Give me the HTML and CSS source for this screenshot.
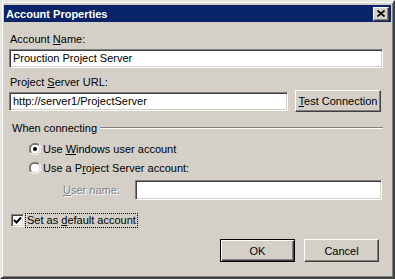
FILE: index.html
```html
<!DOCTYPE html>
<html lang="en">
<head>
    <meta charset="UTF-8">
    <title>Account Properties</title>
    <link rel="stylesheet" href="styles.css">
</head>
<body>
    <div class="window">
        <div class="titlebar">
            <span class="title">Account Properties</span>
            <span class="close-btn">
                <svg width="8" height="7" viewBox="0 0 8 7"><path d="M0.5 0.5 L7.5 6.5 M7.5 0.5 L0.5 6.5" stroke="#000" stroke-width="1.6" fill="none"/></svg>
            </span>
        </div>
        <div class="content">
            <label class="label first">Account <u>N</u>ame:</label>
            <div class="field wide">Prouction Project Server</div>

            <label class="label second">Project <u>S</u>erver URL:</label>
            <div class="url-row">
                <div class="field url">http://server1/ProjectServer</div>
                <button class="btn test-btn"><u>T</u>est Connection</button>
            </div>

            <div class="group-head">
                <span>When connecting</span>
                <span class="etched"></span>
            </div>

            <div class="radio-row first-radio">
                <svg class="radio" width="12" height="12" viewBox="0 0 12 12">
                    <circle cx="6" cy="6" r="5" fill="#fff"/>
                    <path d="M10.2 1.8 A5.9 5.9 0 0 0 1.8 10.2" stroke="#808080" fill="none"/>
                    <path d="M9.5 2.5 A4.9 4.9 0 0 0 2.5 9.5" stroke="#404040" fill="none"/>
                    <path d="M1.8 10.2 A5.9 5.9 0 0 0 10.2 1.8" stroke="#fff" fill="none"/>
                    <path d="M2.5 9.5 A4.9 4.9 0 0 0 9.5 2.5" stroke="#d4d0c8" fill="none"/>
                    <circle cx="6" cy="6" r="2" fill="#000"/>
                </svg>
                <span>Use <u>W</u>indows user account</span>
            </div>
            <div class="radio-row">
                <svg class="radio" width="12" height="12" viewBox="0 0 12 12">
                    <circle cx="6" cy="6" r="5" fill="#fff"/>
                    <path d="M10.2 1.8 A5.9 5.9 0 0 0 1.8 10.2" stroke="#808080" fill="none"/>
                    <path d="M9.5 2.5 A4.9 4.9 0 0 0 2.5 9.5" stroke="#404040" fill="none"/>
                    <path d="M1.8 10.2 A5.9 5.9 0 0 0 10.2 1.8" stroke="#fff" fill="none"/>
                    <path d="M2.5 9.5 A4.9 4.9 0 0 0 9.5 2.5" stroke="#d4d0c8" fill="none"/>
                </svg>
                <span>Use a P<u>r</u>oject Server account:</span>
            </div>

            <div class="user-row">
                <span class="disabled"><u>U</u>ser name:</span>
                <div class="field user"></div>
            </div>

            <div class="check-row">
                <span class="checkbox">
                    <svg width="9" height="9" viewBox="0 0 9 9"><path d="M1 4 L3.5 6.5 L8 1.5" stroke="#000" stroke-width="2" fill="none"/></svg>
                </span>
                <span class="focus">Set as <u>d</u>efault account</span>
            </div>

            <div class="button-row">
                <button class="btn default">OK</button>
                <button class="btn">Cancel</button>
            </div>
        </div>
    </div>
</body>
</html>
```

FILE: styles.css
```css
* {
    margin: 0;
    padding: 0;
    box-sizing: border-box;
}
body {
    font-family: 'Liberation Sans', Arial, sans-serif;
    font-size: 11px;
    color: #000;
    background: #d4d0c8;
}
u {
    text-decoration: underline;
    text-underline-offset: 1px;
}
.window {
    width: 395px;
    height: 279px;
    background: #d4d0c8;
    border: 2px solid;
    border-color: #e8e6e0 #404040 #404040 #e8e6e0;
    box-shadow: inset 1px 1px #fff, inset -1px -1px #808080;
    padding: 2px;
    display: flex;
    flex-direction: column;
}
.titlebar {
    height: 17px;
    margin-top: 1px;
    background: #0a246a;
    display: flex;
    justify-content: space-between;
    align-items: center;
    padding: 0 2px 0 2px;
}
.title {
    color: #fff;
    font-weight: bold;
    font-size: 11px;
}
.close-btn {
    width: 16px;
    height: 14px;
    background: #d4d0c8;
    border: 1px solid;
    border-color: #fff #404040 #404040 #fff;
    box-shadow: inset -1px -1px #808080;
    display: flex;
    justify-content: center;
    align-items: center;
}
.content {
    padding: 0 8px 0 5px;
    display: flex;
    flex-direction: column;
}
.label {
    line-height: 13px;
    padding-left: 1px;
}
.label.first {
    margin-top: 11px;
}
.label.second {
    margin-top: 8px;
}
.field {
    height: 19px;
    background: #fff;
    border: 1px solid;
    border-color: #808080 #fff #fff #808080;
    box-shadow: inset 1px 1px #404040, inset -1px -1px #d4d0c8;
    padding: 0 3px;
    line-height: 17px;
}
.field.wide {
    margin-top: 3px;
}
.url-row {
    display: flex;
    align-items: center;
    margin-top: 1px;
    height: 22px;
}
.field.url {
    width: 279px;
}
.btn {
    font-family: 'Liberation Sans', Arial, sans-serif;
    font-size: 11px;
    color: #000;
    background: #d4d0c8;
    height: 22px;
    white-space: nowrap;
    border: 1px solid;
    border-color: #fff #404040 #404040 #fff;
    box-shadow: inset -1px -1px #808080;
}
.test-btn {
    margin-left: 7px;
    width: 86px;
}
.group-head {
    display: flex;
    align-items: center;
    margin-top: 9px;
    height: 13px;
    padding-left: 3px;
}
.etched {
    flex: 1;
    height: 2px;
    margin-left: 3px;
    border-top: 1px solid #808080;
    border-bottom: 1px solid #fff;
}
.radio-row {
    display: flex;
    align-items: center;
    height: 19px;
    padding-left: 20px;
    gap: 2px;
}
.first-radio {
    margin-top: 5px;
}
.user-row {
    display: flex;
    align-items: center;
    margin-top: 3px;
    height: 20px;
    padding-left: 54px;
}
.disabled {
    color: #808080;
    text-shadow: 1px 1px #fff;
    width: 72px;
}
.field.user {
    flex: 1;
    height: 20px;
    margin-right: 1px;
}
.check-row {
    display: flex;
    align-items: center;
    margin-top: 11px;
    height: 18px;
    padding-left: 2px;
}
.checkbox {
    width: 13px;
    height: 13px;
    background: #fff;
    border: 1px solid;
    border-color: #808080 #fff #fff #808080;
    box-shadow: inset 1px 1px #404040, inset -1px -1px #d4d0c8;
    display: flex;
    justify-content: center;
    align-items: center;
}
.focus {
    margin-left: 1px;
    padding: 0 1px;
    line-height: 13px;
    border: 1px dotted #000;
}
.button-row {
    display: flex;
    justify-content: flex-end;
    gap: 9px;
    margin-top: 10px;
    padding-right: 4px;
}
.button-row .btn {
    width: 75px;
    height: 23px;
}
.btn.default {
    border: 1px solid #000;
    box-shadow: inset 1px 1px #fff, inset -1px -1px #404040, inset -2px -2px #808080;
}
```
